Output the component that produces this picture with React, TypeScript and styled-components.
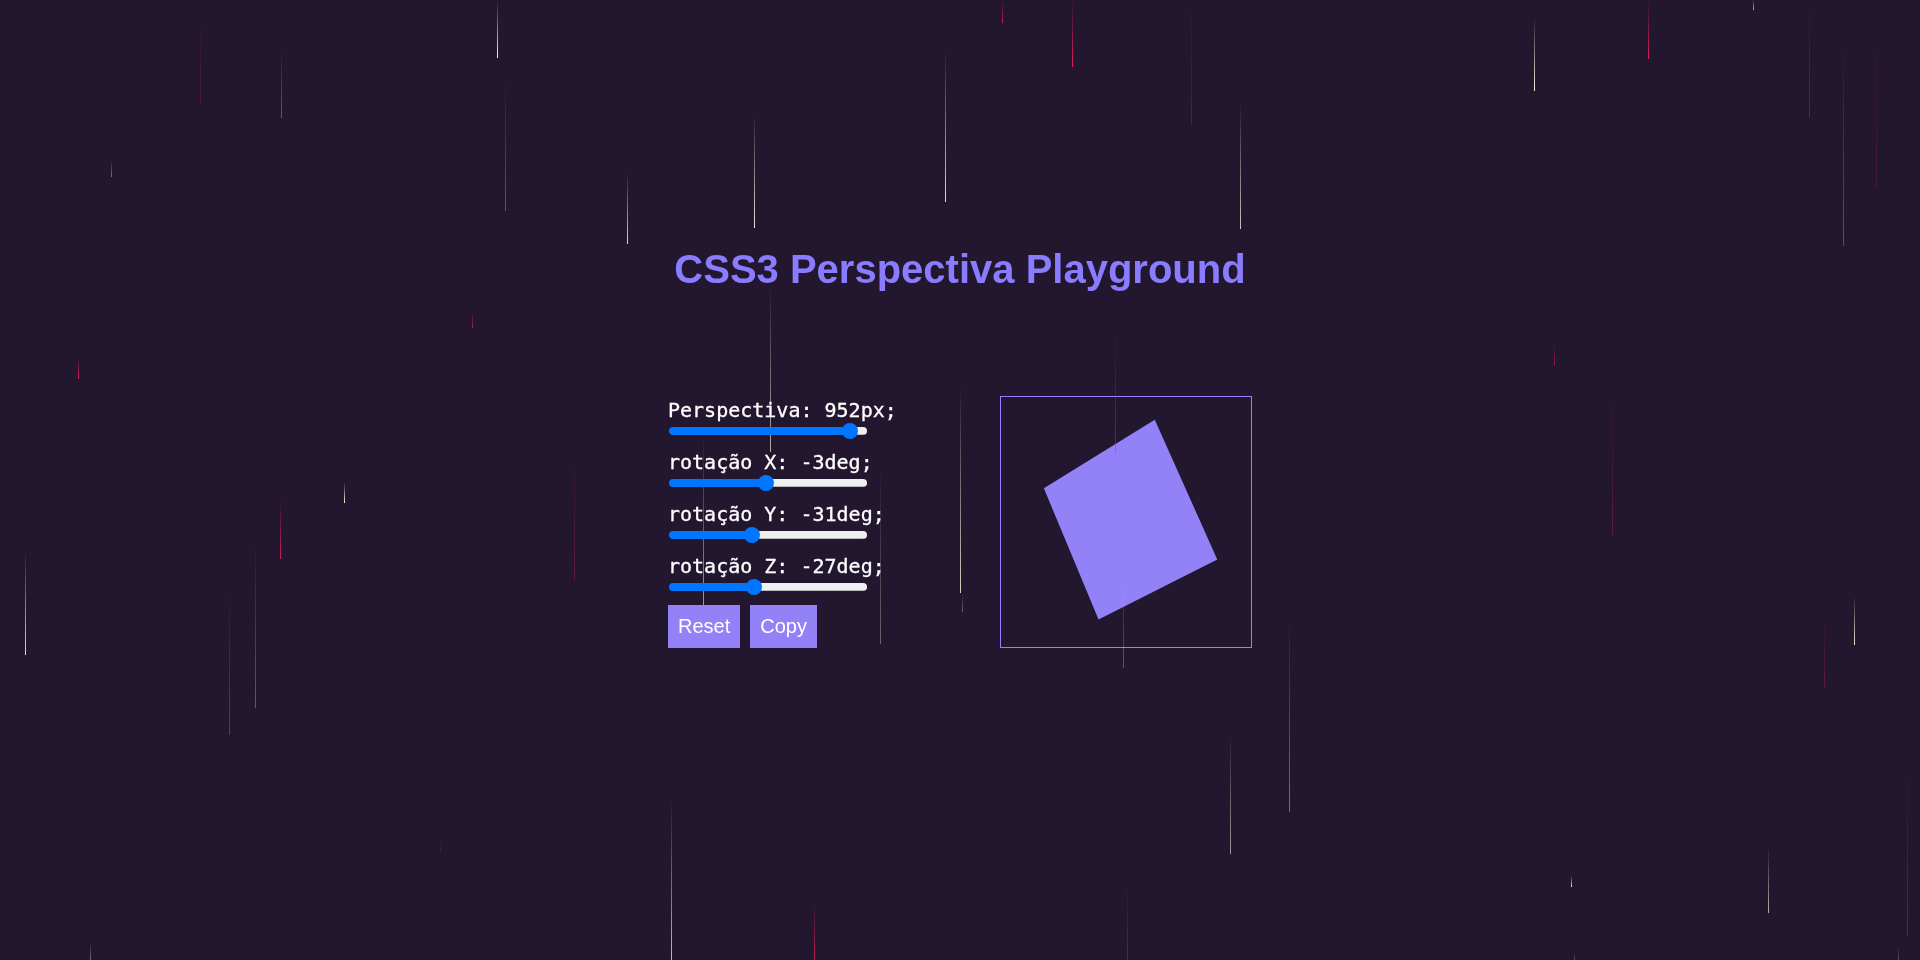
import React from 'react';
import styled, { createGlobalStyle } from 'styled-components';

const GlobalStyle = createGlobalStyle`
    html,
    body {
        margin: 0;
        padding: 0;
        height: 100%;
        background: #23172f;
        overflow: hidden;
    }
`;

type Tone = 'light' | 'pink';

// x, top, bottom, tone, opacity
const DROPS: [number, number, number, Tone, number][] = [
    [200, 13, 103, 'pink', 0.25],
    [281, 48, 118, 'pink', 0.9],
    [497, 0, 58, 'light', 1],
    [111, 160, 177, 'light', 0.4],
    [505, 78, 211, 'pink', 0.85],
    [627, 172, 244, 'light', 0.9],
    [754, 113, 228, 'light', 0.95],
    [945, 50, 202, 'light', 0.9],
    [770, 283, 452, 'light', 0.7],
    [472, 312, 328, 'pink', 0.7],
    [78, 358, 379, 'pink', 0.95],
    [703, 435, 605, 'light', 0.6],
    [574, 447, 580, 'pink', 0.3],
    [880, 463, 644, 'light', 0.35],
    [1002, 0, 23, 'pink', 0.8],
    [1072, 0, 67, 'pink', 0.95],
    [1191, 0, 125, 'pink', 0.3],
    [1240, 103, 229, 'light', 0.8],
    [1534, 17, 91, 'light', 1],
    [1648, 0, 59, 'pink', 0.9],
    [1753, 0, 10, 'light', 0.7],
    [1809, 0, 117, 'pink', 0.4],
    [1843, 42, 246, 'pink', 0.8],
    [1876, 17, 188, 'pink', 0.2],
    [1115, 328, 453, 'pink', 0.5],
    [1554, 345, 365, 'pink', 0.6],
    [1612, 383, 535, 'pink', 0.3],
    [960, 385, 593, 'light', 0.85],
    [962, 593, 612, 'light', 0.35],
    [1123, 577, 668, 'light', 0.3],
    [1289, 615, 812, 'light', 0.4],
    [1230, 732, 854, 'light', 0.6],
    [1127, 883, 960, 'pink', 0.4],
    [1571, 876, 887, 'light', 0.95],
    [1768, 847, 913, 'light', 0.7],
    [1907, 760, 936, 'pink', 0.4],
    [1854, 596, 645, 'light', 0.95],
    [1824, 615, 687, 'pink', 0.3],
    [1574, 952, 960, 'light', 0.25],
    [1898, 947, 960, 'light', 0.25],
    [344, 482, 503, 'light', 1],
    [280, 498, 559, 'pink', 0.85],
    [25, 550, 655, 'light', 0.9],
    [255, 540, 708, 'light', 0.3],
    [229, 587, 735, 'pink', 0.6],
    [440, 842, 852, 'pink', 0.25],
    [671, 800, 960, 'light', 0.75],
    [814, 900, 960, 'pink', 0.75],
    [90, 942, 960, 'light', 0.4],
];

const Rain = styled.div`
    position: absolute;
    inset: 0;
    z-index: 1;
    pointer-events: none;
    overflow: hidden;
`;

const Drop = styled.span<{ $x: number; $top: number; $bottom: number; $tone: Tone; $alpha: number }>`
    position: absolute;
    left: ${(p) => p.$x}px;
    top: ${(p) => p.$top}px;
    width: 1px;
    height: ${(p) => p.$bottom - p.$top}px;
    opacity: ${(p) => p.$alpha};
    background: linear-gradient(
        to bottom,
        transparent,
        ${(p) => (p.$tone === 'pink' ? '#f01f5f' : '#f6efd9')}
    );
`;

const Page = styled.main`
    position: relative;
    box-sizing: border-box;
    height: 960px;
    padding-top: 246px;
    display: flex;
    flex-direction: column;
    align-items: center;
`;

const Title = styled.h1`
    position: relative;
    z-index: 2;
    margin: 0 0 104px;
    font: bold 40px/46px 'Liberation Sans', Arial, sans-serif;
    color: #8a7cff;
`;

const Playground = styled.section`
    display: flex;
    justify-content: space-between;
    width: 584px;
    height: 252px;
`;

const Controls = styled.div`
    position: relative;
    z-index: 2;
    display: flex;
    flex-direction: column;
`;

const Row = styled.div`
    height: 52px;
`;

const RowLabel = styled.label`
    display: block;
    height: 25px;
    font: 20px/28px 'DejaVu Sans Mono', monospace;
    -webkit-text-stroke: 0.3px #ffffff;
    color: #ffffff;
    white-space: nowrap;
`;

const Slider = styled.input<{ $fill: number }>`
    display: block;
    appearance: none;
    width: 198px;
    height: 8px;
    margin: 6px 0 0 1px;
    border-radius: 4px;
    background:
        linear-gradient(#0075ff, #0075ff) 0 0 / ${(p) => p.$fill}px 100% no-repeat,
        linear-gradient(#efefef 7px, #b9b9b9 7px);

    &::-webkit-slider-thumb {
        appearance: none;
        width: 16px;
        height: 16px;
        border-radius: 50%;
        background: #0075ff;
    }
`;

const Actions = styled.div`
    display: flex;
    gap: 10px;
    margin-top: auto;
`;

const ActionButton = styled.button`
    height: 43px;
    padding: 0 10px;
    border: none;
    background: #9381f7;
    color: #ffffff;
    font: 20px 'Liberation Sans', Arial, sans-serif;
`;

const Stage = styled.div`
    box-sizing: border-box;
    width: 252px;
    height: 252px;
    border: 1px solid #9381ff;
    display: flex;
    align-items: center;
    justify-content: center;
`;

const Square = styled.div`
    width: 150px;
    height: 150px;
    background: #9381f7;
    transform: perspective(952px) rotateX(-3deg) rotateY(-31deg) rotateZ(-27deg);
`;

const SLIDERS = [
    { label: 'Perspectiva: 952px;', min: 0, max: 1000, value: 952 },
    { label: 'rotação X: -3deg;', min: -180, max: 180, value: -3 },
    { label: 'rotação Y: -31deg;', min: -180, max: 180, value: -31 },
    { label: 'rotação Z: -27deg;', min: -180, max: 180, value: -27 },
];

// distance from the track's left end to the thumb's centre
const thumbCentre = (min: number, max: number, value: number) => 8 + ((value - min) / (max - min)) * (198 - 16);

export default function App(): React.ReactElement {
    return (
        <>
            <GlobalStyle />
            <Page>
                <Rain>
                    {DROPS.map(([x, top, bottom, tone, alpha]) => (
                        <Drop key={`${x}-${top}`} $x={x} $top={top} $bottom={bottom} $tone={tone} $alpha={alpha} />
                    ))}
                </Rain>
                <Title>CSS3 Perspectiva Playground</Title>
                <Playground>
                    <Controls>
                        {SLIDERS.map((s) => (
                            <Row key={s.label}>
                                <RowLabel>{s.label}</RowLabel>
                                <Slider
                                    type="range"
                                    min={s.min}
                                    max={s.max}
                                    defaultValue={s.value}
                                    $fill={thumbCentre(s.min, s.max, s.value)}
                                />
                            </Row>
                        ))}
                        <Actions>
                            <ActionButton>Reset</ActionButton>
                            <ActionButton>Copy</ActionButton>
                        </Actions>
                    </Controls>
                    <Stage>
                        <Square />
                    </Stage>
                </Playground>
            </Page>
        </>
    );
}
